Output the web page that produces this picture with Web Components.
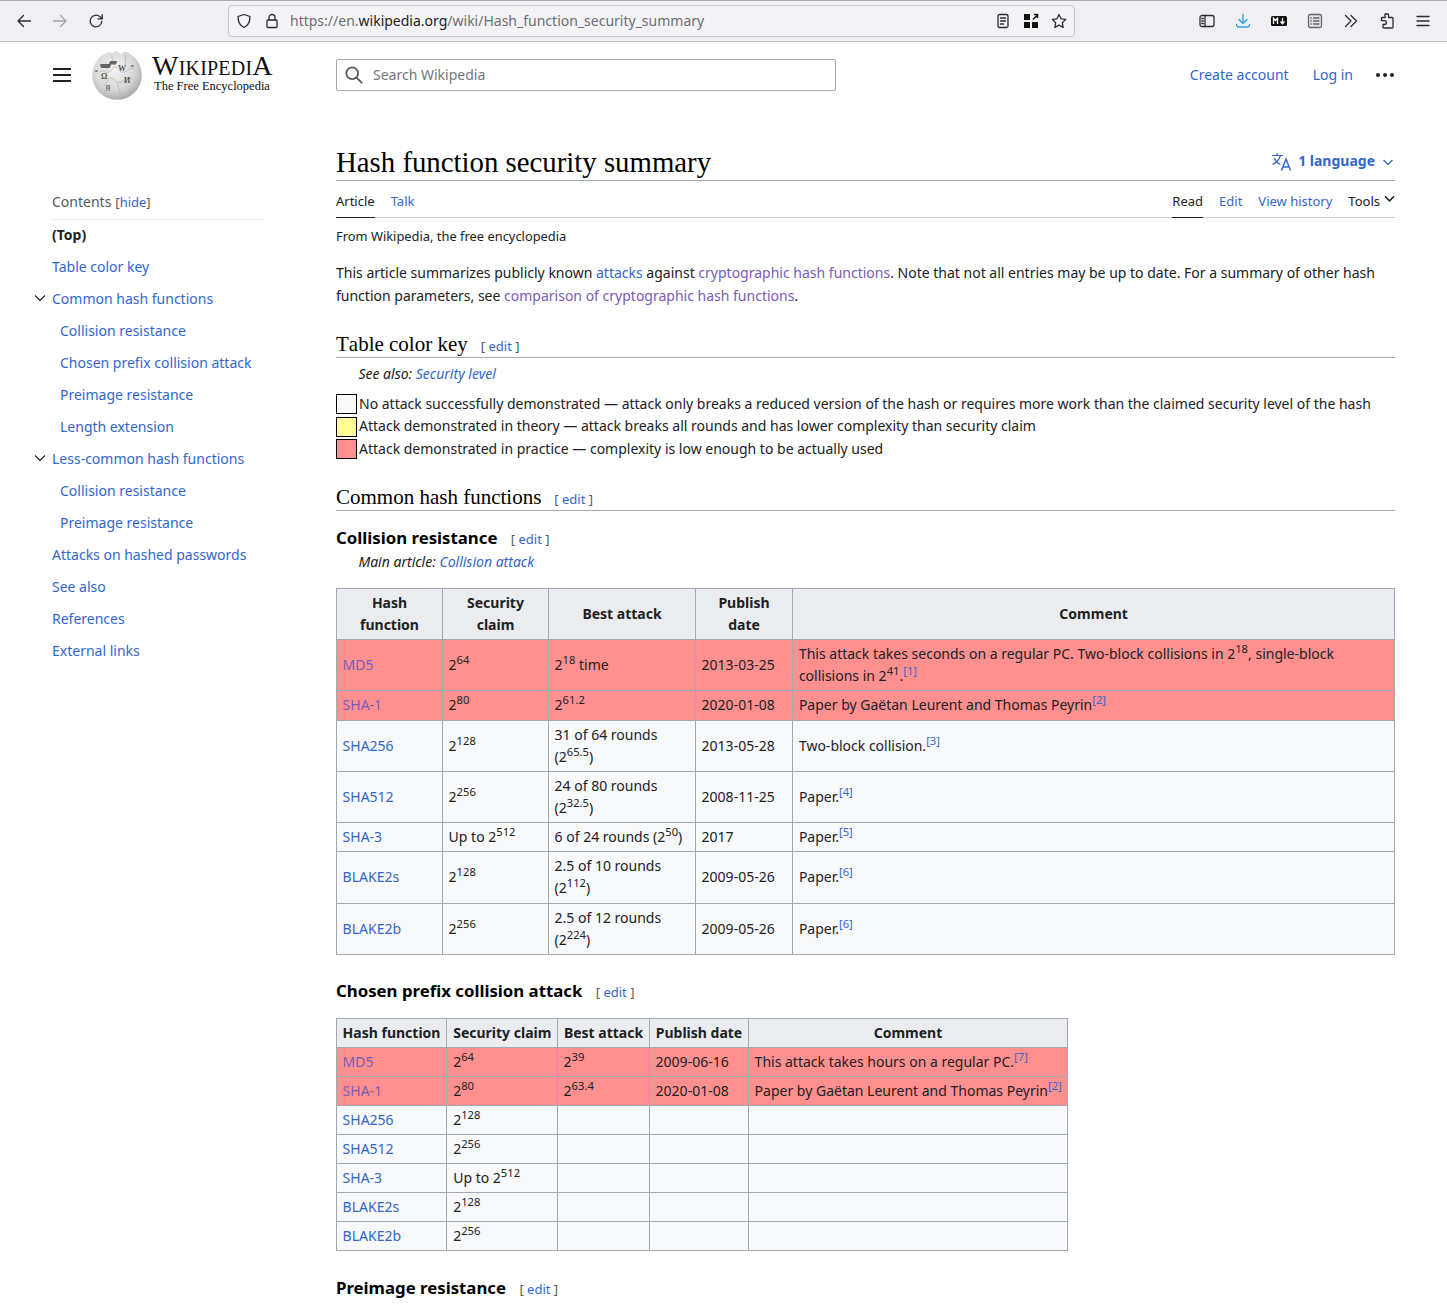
<!DOCTYPE html>
<html lang="en"><head><meta charset="utf-8"><title>Hash function security summary</title>
<style>
html,body{margin:0;padding:0;background:#fff;height:1304px;overflow:hidden}
body{font:14px/22.4px "Noto Sans",sans-serif;color:#202122}
.layout{display:grid;grid-template-columns:213px 1059px;column-gap:71px;padding-left:52px}
</style></head><body>
<browser-chrome></browser-chrome>
<wiki-header></wiki-header>
<div class="layout">
<wiki-toc></wiki-toc>
<wiki-article></wiki-article>
</div>
<script>
const linkCss=`a{color:#36c;text-decoration:none}a.v{color:#795cb2}sup{font-size:11.2px;line-height:1;vertical-align:super}sup.r{font-size:11.2px}`;
function comp(name,html){customElements.define(name,class extends HTMLElement{connectedCallback(){if(this.shadowRoot)return;const s=this.attachShadow({mode:'open'});s.innerHTML=typeof html==='function'?html(this):html;}});}

const I=(d,x='')=>`<svg width="16" height="16" viewBox="0 0 16 16" fill="none" stroke="currentColor" stroke-width="1.3" stroke-linecap="round" stroke-linejoin="round" ${x}>${d}</svg>`;
comp('browser-chrome',`<style>
:host{display:flex;align-items:center;box-sizing:border-box;height:42px;background:#f0f0f4;border-top:1px solid #a8a8a8;border-bottom:1px solid #c4c4c7;padding:0 6px;color:#2b2a33}
.b{width:36px;height:36px;display:flex;align-items:center;justify-content:center;flex:none}
.dim{color:#a2a2a8}
.url{margin-left:114px;margin-right:114px;width:847px;box-sizing:border-box;height:32px;flex:none;display:flex;align-items:center;background:#f4f4f6;border:1px solid #c6c6ca;border-radius:4px;padding:0 1px 0 7px}
.url span.t{flex:1;font-size:14px;color:#6d6d75;white-space:nowrap;margin-left:10px}
.url b{font-weight:400;color:#1c1b22}
.i{width:28px;height:30px;display:flex;align-items:center;justify-content:center;flex:none}
</style>
<div class="b">${I('<path d="M14.500 8H2M7.500 2.500L2 8l5.500 5.500"/>')}</div>
<div class="b dim">${I('<path d="M1.500 8H14M8.500 2.500L14 8l-5.500 5.500"/>')}</div>
<div class="b">${I('<path d="M13.800 8.500A5.800 5.800 0 1 1 11.800 3.600L14 5.500"/><path d="M14.200 1.600V5.800H10"/>')}</div>
<div class="url">
<div class="i" style="width:16px;margin-right:12px">${I('<path d="M8 1.500l6 2c0 5-1.500 9-6 11-4.500-2-6-6-6-11z"/>')}</div>
<div class="i" style="width:16px">${I('<rect x="3" y="7" width="10" height="7.500" rx="1"/><path d="M5 7V4.500a3 3 0 0 1 6 0V7"/>')}</div>
<span class="t">https://en.<b>wikipedia.org</b>/wiki/Hash_function_security_summary</span>
<div class="i">${I('<rect x="3" y="1.500" width="10" height="13" rx="1.500"/><path d="M5.500 5h5M5.500 8h5M5.500 11h3"/>')}</div>
<div class="i"><svg width="16" height="16" viewBox="0 0 16 16"><path fill="#111" d="M1 1h6v6H1zM1 9h6v6H1zM9 9h6v6H9z"/><path d="M10 6.500L14.500 2M11 1.500h3.500V5" fill="none" stroke="#111" stroke-width="1.500"/></svg></div>
<div class="i">${I('<path d="M8 1.500l2 4.300 4.700.600-3.400 3.300.900 4.700L8 12.100l-4.200 2.300.900-4.700L1.300 6.400 6 5.800z"/>')}</div>
</div>
<div class="b">${I('<rect x="1" y="2.500" width="14" height="11" rx="2"/><path d="M6 2.500v11M2.800 5.500h1.500M2.800 8h1.500M2.800 10.500h1.500"/>')}</div>
<div class="b" style="color:#2f9fe8">${I('<path d="M8 1.500V10M4 6.500L8 10.500l4-4M1.500 11.500c0 1.500 1 2.500 2.500 2.500h8c1.500 0 2.500-1 2.500-2.500"/>')}</div>
<div class="b"><svg width="16" height="10" viewBox="0 0 16 10"><rect width="16" height="10" rx="1.500" fill="#111"/><path d="M2.500 8V2.200l2 2.300 2-2.300V8M11.500 2v5.500M9.500 5.500l2 2.200 2-2.200" fill="none" stroke="#fff" stroke-width="1.300"/></svg></div>
<div class="b" style="color:#66666c">${I('<rect x="1.500" y="1.500" width="13" height="13" rx="1.500" fill="#e4e4e7"/><path d="M6.500 5h5.500M6.500 8h5.500M6.500 11h5.500M3.800 5h.5M3.800 8h.5M3.800 11h.5"/>')}</div>
<div class="b">${I('<path d="M2.500 2.500L8 8l-5.500 5.500M8 2.500L13.500 8 8 13.500"/>')}</div>
<div class="b">${I('<path d="M6.500 1h2.200c.5 0 .8.300.8.800V4.500h3.700c.5 0 .8.300.8.800v8.900c0 .5-.3.800-.8.800H4.800c-.5 0-.8-.3-.8-.8v-2.700h1.500a1.900 1.900 0 0 0 0-3.800H2.500V5.300c0-.5.300-.8.800-.8h2.400c.5 0 .8-.5.500-1-.4-1-.5-2.500.3-2.500z"/>')}</div>
<div class="b">${I('<path d="M2 3.500h12M2 8h12M2 12.500h12"/>')}</div>`);

comp('wiki-logo',`<style>
:host{display:flex;align-items:center;gap:10px}
.t{margin-bottom:3.500px}
.w{font:28px/24px "Liberation Serif",serif;color:#111;letter-spacing:.2px;white-space:nowrap}
.w span{font-size:20px}
.s{font:12.500px/14px "Liberation Serif",serif;color:#111;white-space:nowrap;margin:-.5px 0 0 2px}
svg{display:block}
</style>
<svg width="50" height="50" viewBox="0 0 50 50"><defs><radialGradient id="g" cx="44%" cy="38%" r="68%"><stop offset="0" stop-color="#f6f6f6"/><stop offset=".62" stop-color="#d6d6d6"/><stop offset="1" stop-color="#a0a0a0"/></radialGradient></defs>
<circle cx="25" cy="25" r="24.800" fill="url(#g)"/>
<path d="M8 22c4-3 5 2 9 0s3-6 7-5 3 6 8 5 4-5 10-3M12 36c4-4 3-9 7-8s5 6 10 4 5-5 12-3M20 5c-1 5 3 6 2 10M33 5c2 4-1 7 1 11M26 33c-1 5 3 6 2 14M13 12c3 2 2 5 2 9" fill="none" stroke="#b0b0b0" stroke-width=".7"/>
<path d="M8 14h9l1-3h7l-1 3.500h-5l-1 3.500H9z" fill="#666"/>
<g font-family="Liberation Serif,serif" fill="#555" font-weight="700"><text x="9" y="29" font-size="8">&#937;</text><text x="26" y="21" font-size="8">W</text><text x="32" y="33" font-size="8">&#1048;</text><text x="13" y="40" font-size="5.500">&#26376;</text><text x="3" y="22" font-size="4.500">&#1080;</text><text x="39" y="17" font-size="4.500">&#1080;</text></g>
<path d="M0 0h50v4l-5-1-3 1-4-3-6 1-3 2-5-3-3 2-4-1-4 2-4 1-5 3-4 2z" fill="#fff"/></svg>
<div class="t"><div class="w">W<span>IKIPEDI</span>A</div><div class="s">The Free Encyclopedia</div></div>`);

comp('wiki-header',`<style>${linkCss}
:host{display:flex;align-items:center;box-sizing:border-box;height:66px;padding:0 53px 0 52px;position:relative}
.m{width:18px;height:14px;border-top:2px solid #202122;border-bottom:2px solid #202122;position:relative;flex:none;box-sizing:border-box;margin:0 21px 0 1px}
.m:after{content:"";position:absolute;left:0;right:0;top:4px;height:2px;background:#202122}
wiki-logo{width:244px;flex:none}
.search{width:500px;height:32px;box-sizing:border-box;border:1px solid #a2a9b1;border-radius:2px;display:flex;align-items:center;padding-left:8px;color:#72777d;flex:none}
.search svg{margin-right:10px}
.r{margin-left:auto;display:flex;align-items:center;gap:24px}
.dots{display:flex;gap:3px;margin-left:-1px}.dots i{width:4px;height:4px;border-radius:50%;background:#202122;display:block}
</style>
<div class="m"></div><wiki-logo></wiki-logo>
<div class="search"><svg width="18" height="18" viewBox="0 0 20 20" fill="none" stroke="#54595d" stroke-width="2"><circle cx="8" cy="8" r="6.500"/><path d="M12.800 12.800L19 19"/></svg><span>Search Wikipedia</span></div>
<div class="r"><a href="#">Create account</a><a href="#">Log in</a><div class="dots"><i></i><i></i><i></i></div></div>`);

const tocItems=[[0,'(Top)','top'],[0,'Table color key'],[0,'Common hash functions','c'],[1,'Collision resistance'],[1,'Chosen prefix collision attack'],[1,'Preimage resistance'],[1,'Length extension'],[0,'Less-common hash functions','c'],[1,'Collision resistance'],[1,'Preimage resistance'],[0,'Attacks on hashed passwords'],[0,'See also'],[0,'References'],[0,'External links']];
comp('wiki-toc',`<style>${linkCss}
:host{display:block;padding-top:83px}
.h{display:flex;gap:4px;height:28px;border-bottom:1px solid #eaecf0;line-height:22px;color:#54595d}
.h small{font-size:13px}
ul{list-style:none;margin:-1px 0 0;padding:0}
li{height:32px;display:flex;align-items:center;position:relative;white-space:nowrap}
li.s{padding-left:8px}
li b{font-weight:700}
li svg{position:absolute;left:-18px;top:9px}
</style>
<div class="h"><span>Contents</span><small>[<a href="#">hide</a>]</small></div>
<ul>${tocItems.map(([l,t,k])=>`<li class="${l?'s':''}">${k=='top'?`<b>${t}</b>`:`<a href="#">${t}</a>`}${k=='c'?'<svg width="12" height="12" viewBox="0 0 12 12" fill="none" stroke="#202122" stroke-width="1.200"><path d="M1 3.500l5 5 5-5"/></svg>':''}</li>`).join('')}</ul>`);

comp('edit-link',`<style>${linkCss}:host{font:13px/18px "Noto Sans",sans-serif;color:#54595d;margin-left:var(--edit-gap,13.400px);white-space:nowrap}</style>[ <a href="#">edit</a> ]`);

comp('wiki-h2',`<style>:host{display:block;font:21px/26px "Liberation Serif",serif;font-kerning:none;color:#000;border-bottom:1px solid #a2a9b1;--edit-gap:13px}</style><slot></slot><edit-link></edit-link>`);
comp('wiki-h3',`<style>:host{display:block;font:700 16.800px/24px "Noto Sans",sans-serif;color:#000}</style><slot></slot><edit-link></edit-link>`);

const S=(b,e)=>`${b}<sup>${e}</sup>`;
const R=n=>`<sup><a href="#">[${n}]</a></sup>`;
comp('hash-table',el=>{
 const cols=el.getAttribute('cols').split(',');
 const nudge=el.getAttribute('nudge');
 const rows=el.getAttribute('rows').split(',');
 return `<style>${linkCss}
:host{display:block}
table{border-collapse:collapse;table-layout:fixed;width:${cols.reduce((a,b)=>a+ +b,0)}px;background:#f8f9fa;color:#202122}
th,td{border:1px solid #a2a9b1;padding:2.600px 5.600px;text-align:left;box-sizing:border-box;vertical-align:middle}
th{background:#eaecf0;text-align:center;font-weight:700}
tr.red td{background:#ff9090}
tr>*:nth-child(${nudge}){padding-left:${el.getAttribute('pad')}px}
${rows.map((h,i)=>`tr:nth-child(${i+1}){height:${h}px}`).join('')}
</style><table><colgroup>${cols.map(c=>`<col style="width:${c}px">`).join('')}</colgroup>${el.querySelector('template').innerHTML}</table>`;
});

comp('wiki-article',`<style>${linkCss}
:host{display:block;width:1059px}
h1{font:400 28.800px/36px "Liberation Serif",serif;color:#000;margin:0;flex:1}
.top{display:flex;align-items:center;border-bottom:1px solid #a2a9b1;height:36px;margin-top:36px}
.lang{display:flex;align-items:center;color:#36c;font-weight:700;gap:5px;margin:-1px 1px 0 0}
.tabs{display:flex;height:37px;border-bottom:1px solid #c8ccd1;font-size:13px;align-items:stretch;box-sizing:border-box}
.tabs span,.tabs a{display:flex;align-items:center;padding-top:4px;box-sizing:border-box}
.tabs .sel{border-bottom:1px solid #202122;color:#202122;margin-bottom:-1px}
.tabs .l{display:flex;gap:16px}
.tabs .rr{display:flex;gap:16px;margin-left:auto}
.sub{font-size:12.880px;margin:7px 0 0;line-height:22px}
p{margin:14px 0 0;line-height:23px}
.note{font-style:italic;padding-left:22.400px;margin-top:5px;line-height:22px}
.key{margin-top:8px;font-size:14px}
.key div{display:flex;align-items:center;gap:2px;height:22.400px;white-space:nowrap}
.key i{width:21px;height:20px;box-sizing:border-box;border:1px solid #000;display:block;flex:none}
wiki-h2{margin-top:24px}
wiki-h3{margin-top:15px}
</style>
<div class="top"><h1>Hash function security summary</h1>
<div class="lang"><svg width="22" height="20" viewBox="0 0 22 20" fill="none" stroke="#36c" stroke-width="1.200"><path d="M1 3.500h11M6 1v2.500M9.500 3.500C8 8 5 11 1.500 12.500M3.500 6c1 3 3.500 5.500 6 6.500"/><path d="M10.500 18.500L15 7l4.500 11.500M12 15h6" stroke-width="1.500"/></svg><span>1 language</span><svg style="margin-left:2px" width="12" height="12" viewBox="0 0 12 12" fill="none" stroke="#36c" stroke-width="1.300"><path d="M1.500 4l4.500 4.500L10.500 4"/></svg></div></div>
<div class="tabs"><div class="l"><span class="sel">Article</span><a href="#">Talk</a></div>
<div class="rr"><span class="sel">Read</span><a href="#">Edit</a><a href="#">View history</a><span style="gap:4px">Tools<svg style="margin-top:-5px" width="11" height="11" viewBox="0 0 12 12" fill="none" stroke="#202122" stroke-width="1.700"><path d="M1 3.500l5 5 5-5"/></svg></span></div></div>
<div class="sub">From Wikipedia, the free encyclopedia</div>
<p>This article summarizes publicly known <a href="#">attacks</a> against <a class="v" href="#">cryptographic hash functions</a>. Note that not all entries may be up to date. For a summary of other hash<br>function parameters, see <a class="v" href="#">comparison of cryptographic hash functions</a>.</p>
<wiki-h2>Table color key</wiki-h2>
<div class="note">See also: <a href="#">Security level</a></div>
<div class="key">
<div><i style="background:#f8f9fa"></i><span>No attack successfully demonstrated — attack only breaks a reduced version of the hash or requires more work than the claimed security level of the hash</span></div>
<div><i style="background:#ff9"></i><span>Attack demonstrated in theory — attack breaks all rounds and has lower complexity than security claim</span></div>
<div><i style="background:#ff9090"></i><span>Attack demonstrated in practice — complexity is low enough to be actually used</span></div>
</div>
<wiki-h2 style="margin-top:24.300px">Common hash functions</wiki-h2>
<wiki-h3>Collision resistance</wiki-h3>
<div class="note" style="margin-top:1px">Main article: <a href="#">Collision attack</a></div>
<hash-table cols="106,106,147,97,602" rows="51,51,30,51,51,29,52,51" nudge="5" pad="5.900" style="margin-top:14.500px"><template>
<tr><th>Hash<br>function</th><th>Security<br>claim</th><th>Best attack</th><th>Publish<br>date</th><th>Comment</th></tr>
<tr class="red"><td><a class="v" href="#">MD5</a></td><td>${S(2,64)}</td><td>${S(2,18)} time</td><td>2013-03-25</td><td>This attack takes seconds on a regular PC. Two-block collisions in ${S(2,18)}, single-block<br>collisions in ${S(2,41)}.${R(1)}</td></tr>
<tr class="red"><td><a class="v" href="#">SHA-1</a></td><td>${S(2,80)}</td><td>${S(2,61.2)}</td><td>2020-01-08</td><td>Paper by Gaëtan Leurent and Thomas Peyrin${R(2)}</td></tr>
<tr><td><a href="#">SHA256</a></td><td>${S(2,128)}</td><td>31 of 64 rounds<br>(${S(2,65.5)})</td><td>2013-05-28</td><td>Two-block collision.${R(3)}</td></tr>
<tr><td><a href="#">SHA512</a></td><td>${S(2,256)}</td><td>24 of 80 rounds<br>(${S(2,32.5)})</td><td>2008-11-25</td><td>Paper.${R(4)}</td></tr>
<tr><td><a href="#">SHA-3</a></td><td>Up to ${S(2,512)}</td><td>6 of 24 rounds (${S(2,50)})</td><td>2017</td><td>Paper.${R(5)}</td></tr>
<tr><td><a href="#">BLAKE2s</a></td><td>${S(2,128)}</td><td>2.5 of 10 rounds<br>(${S(2,112)})</td><td>2009-05-26</td><td>Paper.${R(6)}</td></tr>
<tr><td><a href="#">BLAKE2b</a></td><td>${S(2,256)}</td><td>2.5 of 12 rounds<br>(${S(2,224)})</td><td>2009-05-26</td><td>Paper.${R(6)}</td></tr>
</template></hash-table>
<wiki-h3 style="margin-top:24px">Chosen prefix collision attack</wiki-h3>
<hash-table cols="110,111,92,99,319" rows="29,29,29,29,29,29,29,29" nudge="2" pad="6.200" style="margin-top:15px"><template>
<tr><th>Hash function</th><th>Security claim</th><th>Best attack</th><th>Publish date</th><th>Comment</th></tr>
<tr class="red"><td><a class="v" href="#">MD5</a></td><td>${S(2,64)}</td><td>${S(2,39)}</td><td>2009-06-16</td><td>This attack takes hours on a regular PC.${R(7)}</td></tr>
<tr class="red"><td><a class="v" href="#">SHA-1</a></td><td>${S(2,80)}</td><td>${S(2,63.4)}</td><td>2020-01-08</td><td style="white-space:nowrap">Paper by Gaëtan Leurent and Thomas Peyrin${R(2)}</td></tr>
<tr><td><a href="#">SHA256</a></td><td>${S(2,128)}</td><td></td><td></td><td></td></tr>
<tr><td><a href="#">SHA512</a></td><td>${S(2,256)}</td><td></td><td></td><td></td></tr>
<tr><td><a href="#">SHA-3</a></td><td>Up to ${S(2,512)}</td><td></td><td></td><td></td></tr>
<tr><td><a href="#">BLAKE2s</a></td><td>${S(2,128)}</td><td></td><td></td><td></td></tr>
<tr><td><a href="#">BLAKE2b</a></td><td>${S(2,256)}</td><td></td><td></td><td></td></tr>
</template></hash-table>
<wiki-h3 style="margin-top:25px">Preimage resistance</wiki-h3>`);
</script>
</body></html>
